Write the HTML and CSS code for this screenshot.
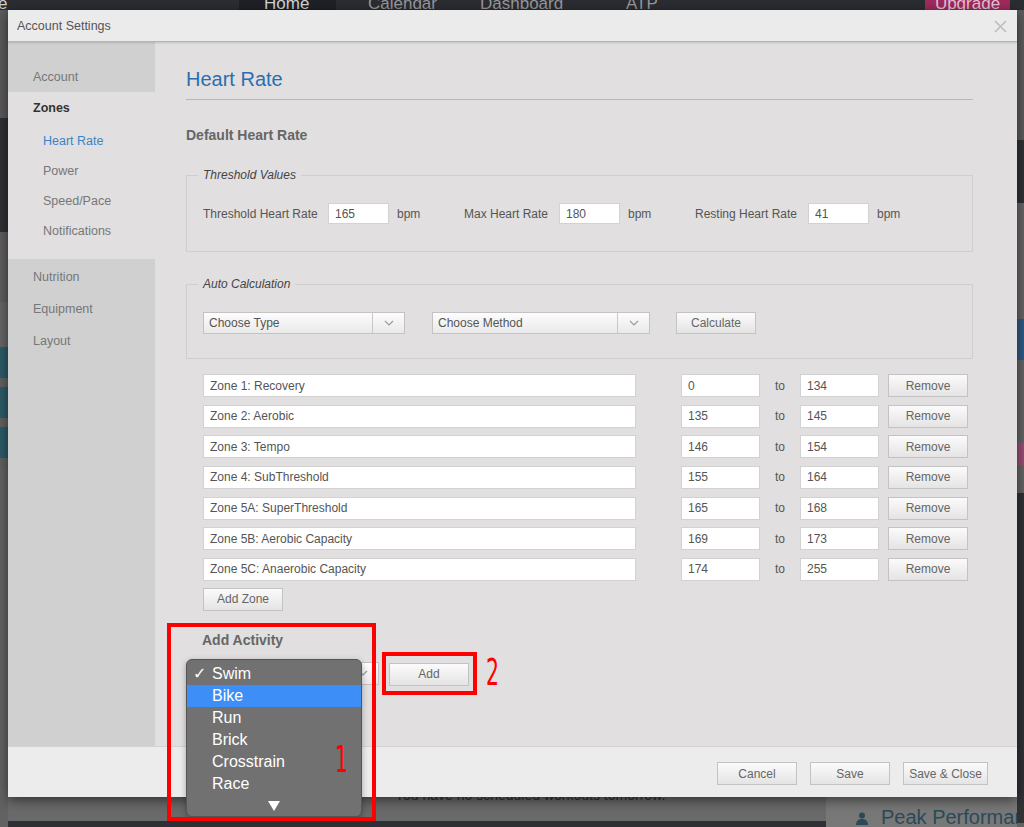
FILE: index.html
```html
<!DOCTYPE html>
<html lang="en">
<head>
	<meta charset="UTF-8">
	<title>Account Settings</title>
	<link rel="stylesheet" href="styles.css">
</head>
<body>
	<div class="page">
		<nav class="topnav">
			<span class="nav-brand">e</span>
			<a class="nav-home" href="#">Home</a>
			<a class="nav-cal" href="#">Calendar</a>
			<a class="nav-dash" href="#">Dashboard</a>
			<a class="nav-atp" href="#">ATP</a>
			<span class="nav-space"></span>
			<a class="nav-upgrade" href="#">Upgrade</a>
		</nav>
		<div class="backdrop">
			<div class="edge edge-left">
				<div class="blk" style="height:108px;background:#5b5b5b"></div>
				<div class="blk dark" style="height:114px"></div>
				<div class="blk" style="height:70px;background:#5f5f5f"></div>
				<div class="blk" style="height:45px;background:#676767"></div>
				<div class="blk teal"></div>
				<div class="blk teal"></div>
				<div class="blk teal"></div>
				<div class="blk" style="height:330px;background:#646464"></div>
			</div>
			<div class="middle">
				<div class="bottom-strip">
					<div class="bottom-left">You have no scheduled workouts tomorrow.</div>
					<div class="bottom-right">
						<svg width="12" height="13" viewBox="0 0 12 13"><circle cx="6" cy="3.5" r="3" fill="#2b4a58"/><path d="M0 13c0-4 2.5-6 6-6s6 2 6 6z" fill="#2b4a58"/></svg>
						<span>Peak Performance</span>
					</div>
				</div>
			</div>
			<div class="edge edge-right">
				<div class="blk" style="height:130px;background:#5d5d5d"></div>
				<div class="blk dark" style="height:63px"></div>
				<div class="blk" style="height:116px;background:#676767"></div>
				<div class="blk" style="height:41px;background:#2f5b86"></div>
				<div class="blk" style="height:83px;background:#666"></div>
				<div class="blk" style="height:22px;background:#9c4f77"></div>
				<div class="blk" style="height:28px;background:#666"></div>
				<div class="blk dark" style="height:330px"></div>
			</div>
		</div>
	</div>

	<div class="modal">
		<header class="modal-header">
			<span class="modal-title">Account Settings</span>
			<svg class="close" width="13" height="13" viewBox="0 0 13 13"><path d="M1 1l11 11M12 1L1 12" stroke="#bdbdbd" stroke-width="1.6"/></svg>
		</header>

		<div class="modal-body">
			<aside class="sidebar">
				<div class="side-account">Account</div>
				<div class="side-zones">
					<div class="side-head">Zones</div>
					<ul class="side-sub">
						<li class="active">Heart Rate</li>
						<li>Power</li>
						<li>Speed/Pace</li>
						<li>Notifications</li>
					</ul>
				</div>
				<ul class="side-rest">
					<li>Nutrition</li>
					<li>Equipment</li>
					<li>Layout</li>
				</ul>
			</aside>

			<main class="content">
				<h2 class="title">Heart Rate</h2>
				<h3 class="subtitle">Default Heart Rate</h3>

				<fieldset class="group">
					<legend>Threshold Values</legend>
					<div class="threshold-row">
						<label class="lbl-threshold">Threshold Heart Rate</label>
						<input class="field small" type="text" value="165">
						<span class="unit">bpm</span>
						<label class="lbl-max">Max Heart Rate</label>
						<input class="field small" type="text" value="180">
						<span class="unit">bpm</span>
						<label class="lbl-rest">Resting Heart Rate</label>
						<input class="field small" type="text" value="41">
						<span class="unit">bpm</span>
					</div>
				</fieldset>

				<fieldset class="group auto">
					<legend>Auto Calculation</legend>
					<div class="calc-row">
						<div class="select type-select">
							<span class="select-value">Choose Type</span>
							<span class="select-arrow"><svg width="10" height="6" viewBox="0 0 10 6"><path d="M1 1l4 4 4-4" fill="none" stroke="#9a9a9a" stroke-width="1.1"/></svg></span>
						</div>
						<div class="select method-select">
							<span class="select-value">Choose Method</span>
							<span class="select-arrow"><svg width="10" height="6" viewBox="0 0 10 6"><path d="M1 1l4 4 4-4" fill="none" stroke="#9a9a9a" stroke-width="1.1"/></svg></span>
						</div>
						<button class="btn">Calculate</button>
					</div>
				</fieldset>

				<div class="zones">
					<div class="zone-row">
						<input class="field zone-name" type="text" value="Zone 1: Recovery">
						<input class="field num" type="text" value="0">
						<span class="to">to</span>
						<input class="field num" type="text" value="134">
						<button class="btn remove">Remove</button>
					</div>
					<div class="zone-row">
						<input class="field zone-name" type="text" value="Zone 2: Aerobic">
						<input class="field num" type="text" value="135">
						<span class="to">to</span>
						<input class="field num" type="text" value="145">
						<button class="btn remove">Remove</button>
					</div>
					<div class="zone-row">
						<input class="field zone-name" type="text" value="Zone 3: Tempo">
						<input class="field num" type="text" value="146">
						<span class="to">to</span>
						<input class="field num" type="text" value="154">
						<button class="btn remove">Remove</button>
					</div>
					<div class="zone-row">
						<input class="field zone-name" type="text" value="Zone 4: SubThreshold">
						<input class="field num" type="text" value="155">
						<span class="to">to</span>
						<input class="field num" type="text" value="164">
						<button class="btn remove">Remove</button>
					</div>
					<div class="zone-row">
						<input class="field zone-name" type="text" value="Zone 5A: SuperThreshold">
						<input class="field num" type="text" value="165">
						<span class="to">to</span>
						<input class="field num" type="text" value="168">
						<button class="btn remove">Remove</button>
					</div>
					<div class="zone-row">
						<input class="field zone-name" type="text" value="Zone 5B: Aerobic Capacity">
						<input class="field num" type="text" value="169">
						<span class="to">to</span>
						<input class="field num" type="text" value="173">
						<button class="btn remove">Remove</button>
					</div>
					<div class="zone-row">
						<input class="field zone-name" type="text" value="Zone 5C: Anaerobic Capacity">
						<input class="field num" type="text" value="174">
						<span class="to">to</span>
						<input class="field num" type="text" value="255">
						<button class="btn remove">Remove</button>
					</div>
				</div>
				<button class="btn add-zone">Add Zone</button>

				<h3 class="subtitle activity-title">Add Activity</h3>
				<div class="activity">
					<div class="select activity-select">
						<span class="select-value">Swim</span>
						<span class="select-arrow"><svg width="10" height="6" viewBox="0 0 10 6"><path d="M1 1l4 4 4-4" fill="none" stroke="#9a9a9a" stroke-width="1.1"/></svg></span>
					</div>
					<button class="btn add">Add</button>

					<ul class="dropdown">
						<li class="opt"><span class="tick">&#10003;</span>Swim</li>
						<li class="opt hover"><span class="tick"></span>Bike</li>
						<li class="opt"><span class="tick"></span>Run</li>
						<li class="opt"><span class="tick"></span>Brick</li>
						<li class="opt"><span class="tick"></span>Crosstrain</li>
						<li class="opt"><span class="tick"></span>Race</li>
						<li class="more"><svg width="12" height="10" viewBox="0 0 12 10"><path d="M0 0h12L6 10z" fill="#fff"/></svg></li>
					</ul>
				</div>
			</main>
		</div>

		<footer class="modal-footer">
			<button class="btn">Cancel</button>
			<button class="btn">Save</button>
			<button class="btn wide">Save &amp; Close</button>
		</footer>
	</div>

	<!-- annotations drawn over the screenshot -->
	<div class="mark mark-1"></div>
	<div class="mark mark-2"></div>
	<span class="mark-num num-1">1</span>
	<span class="mark-num num-2">2</span>
</body>
</html>
```

FILE: styles.css
```css
html {
	box-sizing: border-box;
}

*, *:before, *:after {
	box-sizing: inherit;
}

body {
	margin: 0;
	width: 1024px;
	height: 827px;
	overflow: hidden;
	position: relative;
	background: #626262;
	font-family: "Liberation Sans", Arial, sans-serif;
}

ul {
	list-style: none;
	margin: 0;
	padding: 0;
}

/* page behind the dialog */

.page {
	height: 827px;
	display: flex;
	flex-direction: column;
}

.topnav {
	height: 10px;
	flex: none;
	display: flex;
	overflow: hidden;
	background: #2b2d33;
	font-size: 17px;
	line-height: 18px;
}

.topnav a,
.topnav span {
	color: #9a9a9c;
	text-decoration: none;
	margin-top: -5px;
	height: 24px;
}

.nav-brand {
	width: 241px;
	margin-left: -2px;
	color: #d0d0d0 !important;
}

.nav-home {
	width: 97px;
	padding-left: 25px;
	background: #1f2126;
	color: #d6d6d6 !important;
}

.nav-cal {
	width: 117px;
	padding-left: 32px;
}

.nav-dash {
	width: 145px;
	padding-left: 27px;
}

.nav-atp {
	width: 100px;
	padding-left: 28px;
}

.nav-space {
	flex: 1;
}

.nav-upgrade {
	width: 85px;
	margin-right: 14px;
	text-align: center;
	background: #a02a5f;
	color: #e6c4d4 !important;
}

.backdrop {
	flex: 1;
	display: flex;
}

.edge {
	flex: none;
	display: flex;
	flex-direction: column;
}

.edge-left {
	width: 8px;
}

.edge-right {
	width: 7px;
}

.blk.dark {
	background: #303236;
}

.blk.teal {
	height: 31px;
	margin-bottom: 9px;
	background: #2d5c69;
}

.middle {
	flex: 1;
	min-width: 0;
	display: flex;
	flex-direction: column;
	justify-content: flex-end;
}

.bottom-strip {
	height: 46px;
	display: flex;
}

.bottom-left {
	width: 818px;
	flex: none;
	padding: 6px 0 0 387px;
	background: #6a6a6a;
	border-bottom: 6px solid #2f3034;
	color: #2e2e2e;
	font-size: 14px;
}

.bottom-right {
	flex: 1;
	min-width: 0;
	display: flex;
	align-items: flex-start;
	gap: 13px;
	padding: 31px 0 0 30px;
	background: #787878;
	color: #2b4a58;
	font-size: 20px;
	white-space: nowrap;
	overflow: hidden;
}

.bottom-right svg {
	flex: none;
}

.bottom-right span {
	margin-top: -6px;
}

/* dialog */

.modal {
	position: absolute;
	top: 10px;
	left: 8px;
	width: 1009px;
	height: 787px;
	display: flex;
	flex-direction: column;
	background: #e1dfdf;
	box-shadow: 0 3px 12px rgba(0, 0, 0, .55);
}

.modal-header {
	height: 32px;
	flex: none;
	display: flex;
	align-items: center;
	justify-content: space-between;
	padding: 1px 10px 0 9px;
	background: #ebebeb;
	border-bottom: 1px solid #b5b5b5;
	box-shadow: 0 1px 2px rgba(0, 0, 0, .15);
	position: relative;
}

.modal-title {
	font-size: 12.5px;
	color: #555;
}

.modal-body {
	height: 704px;
	flex: none;
	display: flex;
}

.sidebar {
	width: 147px;
	flex: none;
	display: flex;
	flex-direction: column;
	font-size: 12.5px;
	color: #777;
}

.side-account {
	padding: 27px 0 7px 25px;
	line-height: 16px;
	background: #d0d0d0;
}

.side-zones {
	padding: 1px 0 13px;
	background: #e1dfdf;
}

.side-head {
	padding-left: 25px;
	line-height: 30px;
	font-weight: bold;
	color: #333;
}

.side-sub {
	margin-top: 3px;
}

.side-sub li {
	padding-left: 35px;
	line-height: 30px;
}

.side-sub li.active {
	color: #3a84c8;
}

.side-rest {
	flex: 1;
	padding-top: 2px;
	background: #d0d0d0;
}

.side-rest li {
	padding-left: 25px;
	line-height: 32px;
}

.content {
	flex: 1;
	padding: 0 44px 0 31px;
	color: #555;
	font-size: 12px;
}

.title {
	margin: 25px 0 0;
	padding-bottom: 8px;
	border-bottom: 1px solid #b8b8b8;
	font-size: 20px;
	line-height: 24px;
	font-weight: normal;
	color: #2a6eb1;
}

.subtitle {
	margin: 26px 0 0;
	font-size: 14px;
	line-height: 18px;
	font-weight: bold;
	color: #666;
}

.group {
	margin: 24px 0 0;
	padding: 20px 0 27px 16px;
	border: 1px solid #cfcfcf;
	min-width: 0;
}

.group.auto {
	margin-top: 25px;
	padding-bottom: 24px;
}

.group legend {
	margin-left: -5px;
	padding: 0 5px;
	font-style: italic;
	font-size: 12px;
	line-height: 15px;
	color: #444;
}

.threshold-row {
	display: flex;
	align-items: center;
	height: 21px;
}

.lbl-threshold {
	width: 125px;
}

.lbl-max {
	width: 95px;
}

.lbl-rest {
	width: 113px;
}

.unit {
	width: 75px;
	padding-left: 8px;
}

.field {
	height: 23px;
	padding: 0 6px;
	border: 1px solid #d2d2d2;
	background: #fff;
	font-family: inherit;
	font-size: 12px;
	color: #555;
	outline: none;
}

.field.small {
	width: 61px;
	height: 21px;
}

.btn {
	height: 23px;
	width: 80px;
	padding: 0;
	border: 1px solid #c3c3c3;
	background: linear-gradient(#fbfbfb, #e4e4e4);
	font-family: inherit;
	font-size: 12px;
	color: #666;
}

.calc-row {
	display: flex;
	height: 22px;
	gap: 27px;
}

.calc-row .btn {
	height: 22px;
	margin-left: -1px;
}

.select {
	display: flex;
	height: 22px;
	border: 1px solid #c3c3c3;
	background: linear-gradient(#fdfdfd, #e9e9e9);
	color: #555;
	font-size: 12px;
}

.select-value {
	flex: 1;
	padding-left: 5px;
	line-height: 20px;
}

.select-arrow {
	width: 32px;
	display: flex;
	align-items: center;
	justify-content: center;
	border-left: 1px solid #c8c8c8;
}

.type-select {
	width: 202px;
}

.method-select {
	width: 218px;
}

.zones {
	margin-top: 15px;
	padding-left: 17px;
	display: flex;
	flex-direction: column;
	gap: 7.67px;
}

.zone-row {
	display: flex;
	align-items: center;
}

.zone-name {
	width: 433px;
	margin-right: 45px;
}

.num {
	width: 79px;
}

.to {
	width: 40px;
	text-align: center;
}

.remove {
	margin-left: 9px;
}

.add-zone {
	display: block;
	margin: 7px 0 0 17px;
}

.activity-title {
	margin: 20px 0 0 16px;
}

.activity {
	position: relative;
	display: flex;
	align-items: flex-start;
	margin: 13px 0 0 17px;
}

.activity-select {
	width: 176px;
	height: 23px;
}

.add {
	margin: 1px 0 0 10px;
}

/* native popup of the activity select, open */
.dropdown {
	position: absolute;
	left: -17px;
	top: -3px;
	width: 176px;
	height: 158px;
	padding-top: 3px;
	border: 1px solid #555;
	border-radius: 6px;
	background: #717171;
	color: #fff;
	font-size: 16px;
	box-shadow: 0 2px 6px rgba(0, 0, 0, .3);
}

.opt {
	display: flex;
	height: 22px;
	line-height: 22px;
	padding-left: 6px;
}

.opt.hover {
	background: #3d8ef6;
}

.tick {
	width: 19px;
	font-family: "DejaVu Sans", sans-serif;
	font-size: 16px;
	font-weight: bold;
}

.more {
	height: 22px;
	display: flex;
	align-items: center;
	justify-content: center;
}

.modal-footer {
	flex: 1;
	display: flex;
	justify-content: flex-end;
	gap: 13px;
	padding: 15px 29px 0 0;
	background: #ececec;
	border-top: 1px solid #d3d3d3;
}

.btn.wide {
	width: 85px;
}

/* red annotations */

.mark {
	position: absolute;
	border: 4px solid #fe0000;
}

.mark-1 {
	left: 167px;
	top: 623px;
	width: 209px;
	height: 198px;
}

.mark-2 {
	left: 382px;
	top: 652px;
	width: 95px;
	height: 43px;
}

.mark-num {
	position: absolute;
	color: #fe0000;
	font-family: "DejaVu Sans", sans-serif;
	font-size: 37px;
	line-height: 37px;
	transform: scaleX(.55);
	transform-origin: left top;
}

.num-1 {
	left: 335px;
	top: 741px;
}

.num-2 {
	left: 486px;
	top: 654px;
}
```
